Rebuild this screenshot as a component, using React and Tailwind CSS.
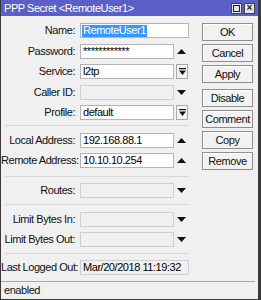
import React from 'react';

const Up = () => (
  <svg width="9" height="5" viewBox="0 0 9 5" className="block">
    <polygon points="0,5 9,5 4.5,0" fill="#111" />
  </svg>
);

const Down = () => (
  <svg width="9" height="5" viewBox="0 0 9 5" className="block">
    <polygon points="0,0 9,0 4.5,5" fill="#111" />
  </svg>
);

const DropBtn = () => (
  <div className="ml-[2px] w-[12px] h-[15px] border border-[#a8a8a8] bg-[#f4f4f4] flex items-center justify-center">
    <svg width="7" height="7" viewBox="0 0 7 7" className="block">
      <rect x="0" y="0" width="7" height="1.2" fill="#111" />
      <polygon points="0,2.5 7,2.5 3.5,7" fill="#111" />
    </svg>
  </div>
);

const Row = ({ label, children }) => (
  <div className="flex items-center h-[15px]">
    <div className="w-[74px] text-right whitespace-nowrap text-[#111]">{label}</div>
    <div className="ml-[5px] flex items-center h-[15px]">{children}</div>
  </div>
);

const Field = ({ value, wide, empty, readOnly }) => (
  <div
    className={`h-[15px] flex items-center px-[2px] border whitespace-nowrap overflow-hidden ${
      wide ? 'w-[109px]' : 'w-[94px]'
    } ${
      empty || readOnly
        ? 'bg-[#f0f0f0] border-[#cfcfcf]'
        : 'bg-white border-[#b4b4b4]'
    } ${readOnly ? 'border-[#a8a8a8]' : ''}`}
  >
    {value}
  </div>
);

const Arrow = ({ children }) => (
  <div className="w-[15px] flex items-center justify-center">{children}</div>
);

const Sep = ({ mt, mb }) => (
  <div className={`h-px bg-[#d6d6d6] ml-[4px] w-[184px] ${mt} ${mb}`} />
);

const Btn = ({ children, className = '' }) => (
  <div
    className={`h-[18px] w-[51px] flex items-center justify-center border border-[#8e8e8e] bg-[#f2f2f2] shadow-[inset_1px_1px_0_#ffffff] text-[#111] ${className}`}
  >
    {children}
  </div>
);

export default function App() {
  return (
    <div className="w-[261px] h-[300px] flex flex-col bg-[#f0f0f0] border-l border-r-[3px] border-b border-[#3a3a3a] font-['Liberation_Sans',Arial,sans-serif] text-[11px] tracking-[-0.45px] leading-none">
      {/* Title bar */}
      <div className="h-[16px] bg-[#5b5fc7] flex items-center justify-between pl-[3px] pr-[3px] shrink-0">
        <span className="text-white">PPP Secret &lt;RemoteUser1&gt;</span>
        <div className="flex gap-[2px]">
          <div className="w-[11px] h-[11px] bg-[#e4e4e4] border border-[#444] flex items-center justify-center">
            <div className="w-[7px] h-[7px] border border-[#222]" />
          </div>
          <div className="w-[11px] h-[11px] bg-[#e4e4e4] border border-[#444] flex items-center justify-center text-[10px] font-bold text-[#222] tracking-normal">
            ×
          </div>
        </div>
      </div>

      {/* Body */}
      <div className="flex-1 flex">
        <div className="w-[201px] pt-[7px]">
          <div className="flex flex-col gap-[5.5px]">
            <Row label="Name:">
              <div className="w-[109px] h-[15px] flex items-center px-[1px] border border-[#b4b4b4] bg-white">
                <span className="bg-[#3399ff] text-white h-[12px] flex items-center px-[1px]">RemoteUser1</span>
              </div>
            </Row>
            <Row label="Password:">
              <Field value="************" />
              <Arrow><Up /></Arrow>
            </Row>
            <Row label="Service:">
              <Field value="l2tp" />
              <DropBtn />
            </Row>
            <Row label="Caller ID:">
              <Field empty />
              <Arrow><Down /></Arrow>
            </Row>
            <Row label="Profile:">
              <Field value="default" />
              <DropBtn />
            </Row>
          </div>
          <Sep mt="mt-[5px]" mb="mb-[7px]" />
          <div className="flex flex-col gap-[5px]">
            <Row label="Local Address:">
              <Field value="192.168.88.1" />
              <Arrow><Up /></Arrow>
            </Row>
            <Row label="Remote Address:">
              <Field value="10.10.10.254" />
              <Arrow><Up /></Arrow>
            </Row>
          </div>
          <Sep mt="mt-[8px]" mb="mb-[6px]" />
          <Row label="Routes:">
            <Field empty />
            <Arrow><Down /></Arrow>
          </Row>
          <Sep mt="mt-[6px]" mb="mb-[7px]" />
          <div className="flex flex-col gap-[5px]">
            <Row label="Limit Bytes In:">
              <Field empty />
              <Arrow><Down /></Arrow>
            </Row>
            <Row label="Limit Bytes Out:">
              <Field empty />
              <Arrow><Down /></Arrow>
            </Row>
          </div>
          <Sep mt="mt-[6px]" mb="mb-[6px]" />
          <Row label="Last Logged Out:">
            <Field value="Mar/20/2018 11:19:32" wide readOnly />
          </Row>
        </div>

        <div className="pt-[7px] flex flex-col">
          <div className="flex flex-col gap-[3px]">
            <Btn>OK</Btn>
            <Btn>Cancel</Btn>
            <Btn>Apply</Btn>
          </div>
          <div className="flex flex-col gap-[3px] mt-[6px]">
            <Btn>Disable</Btn>
            <Btn>Comment</Btn>
            <Btn>Copy</Btn>
            <Btn>Remove</Btn>
          </div>
        </div>
      </div>

      {/* Status bar */}
      <div className="h-[18px] shrink-0 w-[254px] border-t border-[#a9a9a9] flex items-center pl-[3px] text-[#111]">
        enabled
      </div>
    </div>
  );
}
